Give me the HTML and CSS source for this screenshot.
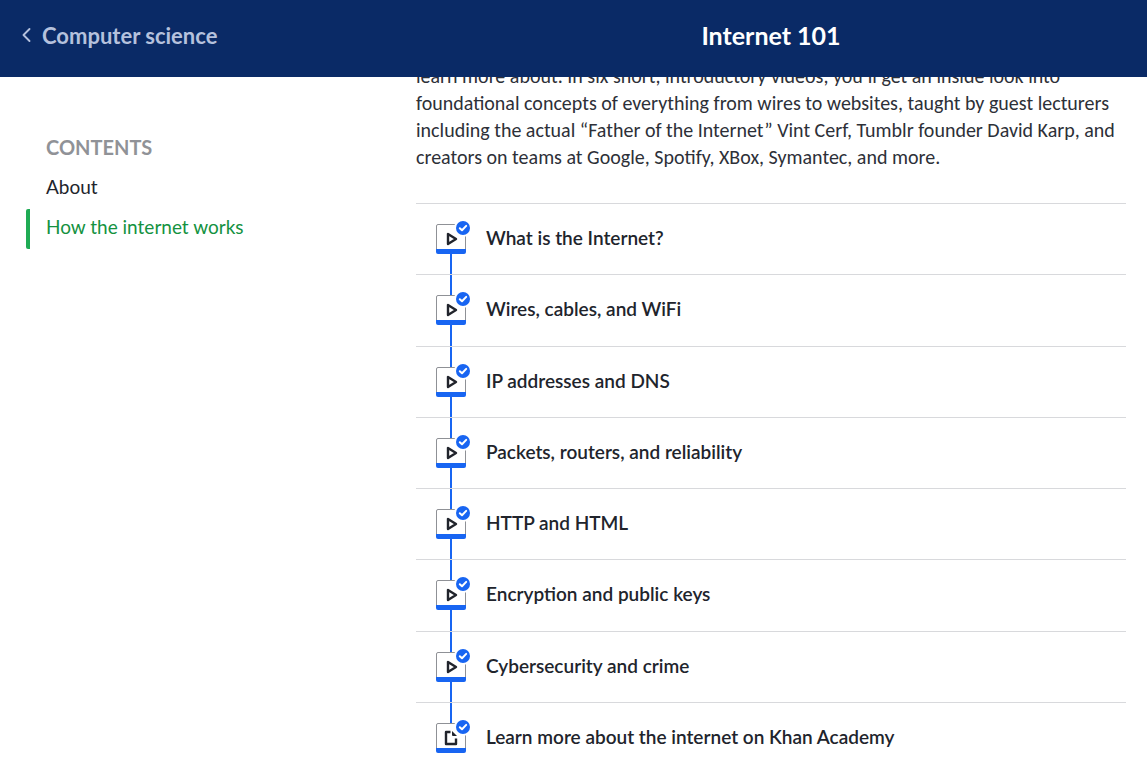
FILE: index.html
```html
<!DOCTYPE html>
<html lang="en">
<head>
<meta charset="utf-8">
<title>Internet 101</title>
<link rel="stylesheet" href="styles.css">
</head>
<body>
<svg class="defs" aria-hidden="true">
  <symbol id="frame" viewBox="0 0 30 30">
    <path d="M.5 28V2Q.5.5 2 .5H28Q29.500.5 29.500 2V28" fill="#fff" stroke="#8f9196"/>
    <path d="M0 25H30V28Q30 30 28 30H2Q0 30 0 28Z" fill="#1865f2"/>
    <circle cx="27" cy="4" r="9" fill="#fff"/>
    <circle cx="27" cy="4" r="7" fill="#1865f2"/>
    <path d="M23.800 4.200 26 6.300 30.200 1.900" fill="none" stroke="#fff" stroke-width="2" stroke-linecap="round" stroke-linejoin="round"/>
  </symbol>
  <symbol id="play" viewBox="0 0 30 30">
    <path d="M12 10V20L20 15Z" fill="none" stroke="#21242c" stroke-width="2.400" stroke-linejoin="round"/>
  </symbol>
  <symbol id="article" viewBox="0 0 30 30">
    <path d="M14.500 9H10V21H20V15.500" fill="none" stroke="#21242c" stroke-width="2.400" stroke-linejoin="round"/>
    <path d="M16 8 21 13H17Q16 13 16 12Z" fill="#21242c"/>
  </symbol>
</svg>
<header class="topbar">
  <a class="back" href="#">
    <svg class="chevron" viewBox="0 0 10 16" aria-hidden="true"><path d="M7.500 2 1.500 8 7.500 14" fill="none" stroke="currentColor" stroke-width="1.900" stroke-linecap="round" stroke-linejoin="round"/></svg>
    Computer science
  </a>
  <h1 class="title">Internet 101</h1>
</header>
<div class="page">
  <nav class="contents" aria-labelledby="contents-title">
    <h2 class="contents-title" id="contents-title">CONTENTS</h2>
    <a class="contents-link" href="#about">About</a>
    <a class="contents-link active" href="#lessons">How the internet works</a>
  </nav>
  <main class="main">
    <p class="intro" id="about">learn more about. In six short, introductory videos, you’ll get an inside look into foundational concepts of everything from wires to websites, taught by guest lecturers including the actual “Father of the Internet” Vint Cerf, Tumblr founder David Karp, and creators on teams at Google, Spotify, XBox, Symantec, and more.</p>
    <ul class="lessons" id="lessons">
      <li><a class="lesson" href="#"><span class="rail"><svg class="icon" aria-hidden="true"><use href="#frame"/><use href="#play"/></svg></span><span class="name">What is the Internet?</span></a></li>
      <li><a class="lesson" href="#"><span class="rail"><svg class="icon" aria-hidden="true"><use href="#frame"/><use href="#play"/></svg></span><span class="name">Wires, cables, and WiFi</span></a></li>
      <li><a class="lesson" href="#"><span class="rail"><svg class="icon" aria-hidden="true"><use href="#frame"/><use href="#play"/></svg></span><span class="name">IP addresses and DNS</span></a></li>
      <li><a class="lesson" href="#"><span class="rail"><svg class="icon" aria-hidden="true"><use href="#frame"/><use href="#play"/></svg></span><span class="name">Packets, routers, and reliability</span></a></li>
      <li><a class="lesson" href="#"><span class="rail"><svg class="icon" aria-hidden="true"><use href="#frame"/><use href="#play"/></svg></span><span class="name">HTTP and HTML</span></a></li>
      <li><a class="lesson" href="#"><span class="rail"><svg class="icon" aria-hidden="true"><use href="#frame"/><use href="#play"/></svg></span><span class="name">Encryption and public keys</span></a></li>
      <li><a class="lesson" href="#"><span class="rail"><svg class="icon" aria-hidden="true"><use href="#frame"/><use href="#play"/></svg></span><span class="name">Cybersecurity and crime</span></a></li>
      <li><a class="lesson" href="#"><span class="rail"><svg class="icon" aria-hidden="true"><use href="#frame"/><use href="#article"/></svg></span><span class="name">Learn more about the internet on Khan Academy</span></a></li>
    </ul>
  </main>
</div>
</body>
</html>
```
FILE: styles.css
```css
* { box-sizing: border-box; }
body {
  margin: 0;
  height: 100vh;
  overflow: hidden;
  background: #fff;
  color: #21242c;
  font-family: Lato, "Liberation Sans", sans-serif;
  font-size: 19px;
  line-height: 27px;
}
a { color: inherit; text-decoration: none; }
.defs { display: none; }
.topbar, .page {
  display: grid;
  grid-template-columns: 390px 1fr;
  column-gap: 26px;
  padding-right: 21px;
}
.topbar {
  position: relative;
  z-index: 1;
  align-items: center;
  padding-bottom: 6px;
  min-height: 77px;
  background: #0a2a66;
}
.back {
  display: flex;
  align-items: center;
  gap: 10px;
  padding-left: 22px;
  color: #b5c1dd;
  font-size: 22px;
  font-weight: 700;
}
.chevron { width: 10px; height: 16px; margin-bottom: 2px; }
.title {
  margin: 0;
  text-align: center;
  color: #fff;
  font-size: 25px;
  font-weight: 700;
}
.contents { padding: 50px 0 0 26px; }
.contents-title {
  margin: 0 0 2px;
  padding-left: 20px;
  color: #909297;
  font-size: 20px;
  line-height: 40px;
  font-weight: 700;
}
.contents-link {
  display: block;
  padding: 0 0 4px 16px;
  border-left: 4px solid transparent;
  border-radius: 2px;
  line-height: 36px;
}
.active { border-color: #1fab54; color: #14923f; }
.intro {
  margin: -14px 0 32px;
  font-family: Carlito, Lato, "Liberation Sans", sans-serif;
  font-size: 20px;
  color: #2d3038;
}
.lessons {
  display: grid;
  grid-auto-rows: 1fr;
  min-height: 570px;
  margin: 0;
  padding: 0;
  list-style: none;
}
.lessons li { display: grid; border-top: 1px solid #d8d9dc; }
.lesson {
  display: flex;
  align-items: center;
  gap: 20px;
  padding-left: 20px;
  font-weight: 600;
}
.name { padding-bottom: 3px; }
.rail {
  display: flex;
  flex-direction: column;
  align-items: center;
  align-self: stretch;
}
.rail::before, .rail::after {
  content: "";
  flex: 1;
  width: 2px;
  background: #1865f2;
}
li:first-child .rail::before, li:last-child .rail::after { background: none; }
.icon { width: 30px; height: 30px; overflow: visible; }
#frame { overflow: visible; }
```
